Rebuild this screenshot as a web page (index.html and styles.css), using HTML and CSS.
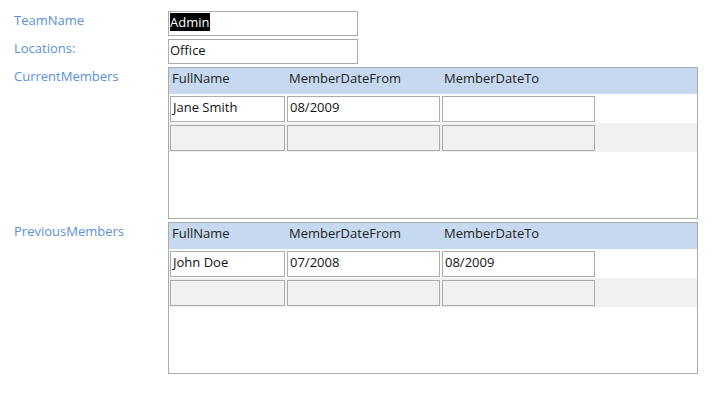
FILE: index.html
```html
<!DOCTYPE html>
<html>
<head>
<meta charset="utf-8">
<link rel="stylesheet" href="styles.css">
</head>
<body>
<div class="form">
  <div class="field">
    <div class="label">TeamName</div>
    <div class="textbox"><span class="sel">Admin</span></div>
  </div>
  <div class="field">
    <div class="label">Locations:</div>
    <div class="textbox">Office</div>
  </div>
  <div class="field">
    <div class="label">CurrentMembers</div>
    <div class="subform">
      <div class="sf-head">
        <span>FullName</span><span>MemberDateFrom</span><span>MemberDateTo</span>
      </div>
      <div class="sf-row">
        <div class="cell">Jane Smith</div><div class="cell">08/2009</div><div class="cell"></div>
      </div>
      <div class="sf-row new">
        <div class="cell"></div><div class="cell"></div><div class="cell"></div>
      </div>
    </div>
  </div>
  <div class="field">
    <div class="label">PreviousMembers</div>
    <div class="subform">
      <div class="sf-head">
        <span>FullName</span><span>MemberDateFrom</span><span>MemberDateTo</span>
      </div>
      <div class="sf-row">
        <div class="cell">John Doe</div><div class="cell">07/2008</div><div class="cell">08/2009</div>
      </div>
      <div class="sf-row new">
        <div class="cell"></div><div class="cell"></div><div class="cell"></div>
      </div>
    </div>
  </div>
</div>
</body>
</html>
```
FILE: styles.css
```css
html, body {
  margin: 0;
  padding: 0;
  background: #ffffff;
}
body {
  font-family: "Open Sans", "Noto Sans", sans-serif;
  font-size: 13px;
  color: #111;
}
.form {
  display: flex;
  flex-direction: column;
  gap: 3px;
  padding-top: 11px;
}
.field {
  display: flex;
  align-items: flex-start;
}
.label {
  width: 154px;
  padding-left: 14px;
  color: #5a90d8;
  line-height: 18px;
  padding-top: 0;
}
.textbox {
  box-sizing: border-box;
  width: 190px;
  height: 25px;
  border: 1px solid #ababab;
  padding: 1px 0 0 1px;
  line-height: 18px;
  background: #fff;
}
.sel {
  background: #000;
  color: #fff;
  display: inline-block;
  padding-right: 1px;
}
.subform {
  box-sizing: border-box;
  width: 530px;
  height: 152px;
  border: 1px solid #ababab;
  background: #fff;
}
.sf-head {
  display: grid;
  grid-template-columns: 115px 153px 153px;
  column-gap: 2px;
  height: 26px;
  padding-left: 1px;
  background: #c6d9f0;
  color: #222;
  line-height: 18px;
  box-sizing: border-box;
  padding-top: 1px;
}
.sf-head span {
  padding-left: 2px;
}
.sf-row {
  display: grid;
  grid-template-columns: 115px 153px 153px;
  column-gap: 2px;
  height: 29px;
  box-sizing: border-box;
  padding: 2px 0 1px 1px;
}
.sf-row.new {
  background: #f1f1f1;
}
.cell {
  box-sizing: border-box;
  height: 26px;
  border: 1px solid #ababab;
  background: #fff;
  padding: 1px 0 0 2px;
  line-height: 18px;
}
.sf-row.new .cell {
  background: #f1f1f1;
}
```
